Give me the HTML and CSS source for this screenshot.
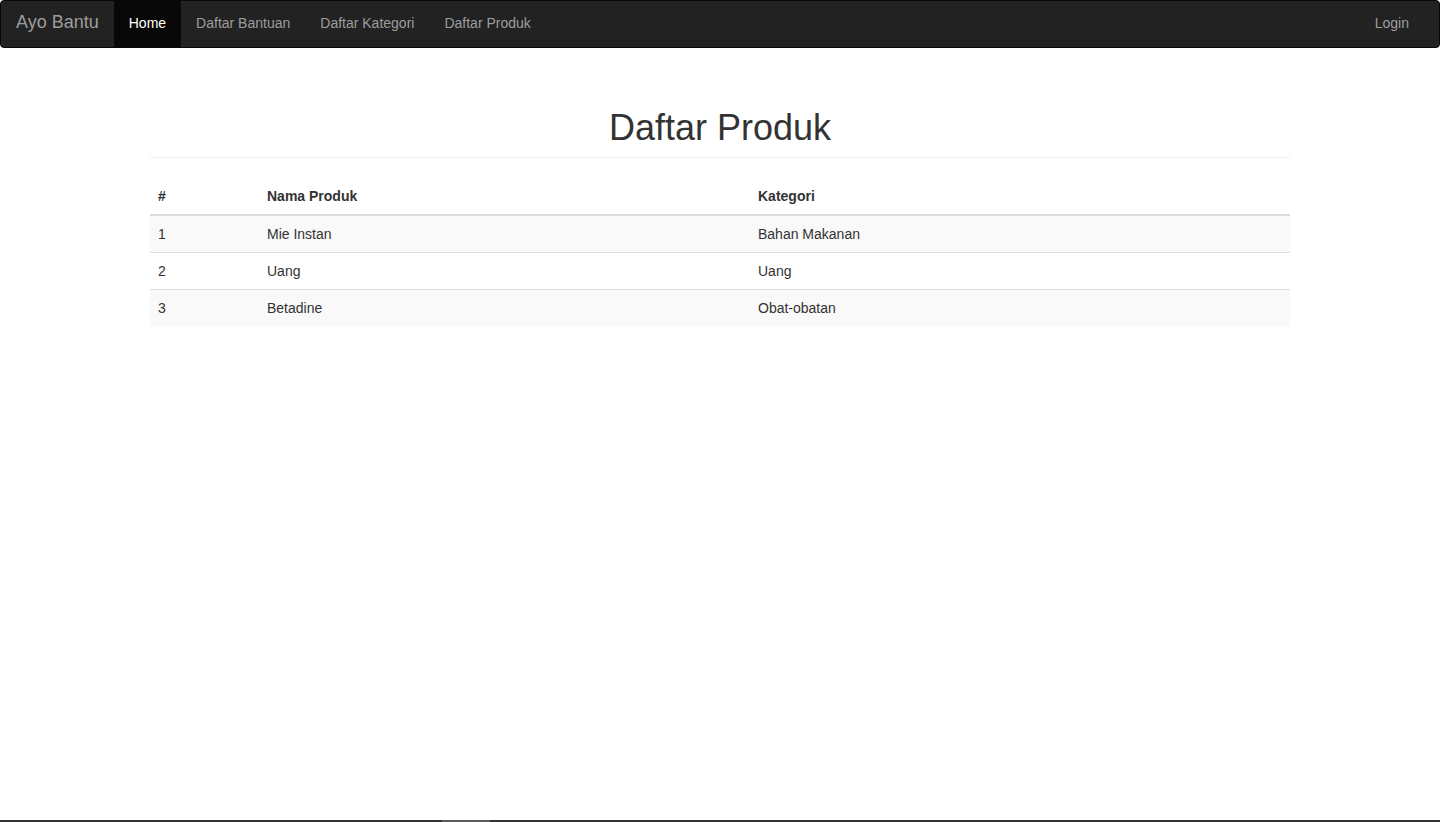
FILE: index.html
```html
<!DOCTYPE html>
<html lang="id">
<head>
<meta charset="utf-8">
<title>Ayo Bantu - Daftar Produk</title>
<link rel="stylesheet" href="styles.css">
</head>
<body>
<nav class="navbar">
  <div class="nav-left">
    <a class="brand" href="#">Ayo Bantu</a>
    <ul class="nav-links">
      <li><a class="active" href="#">Home</a></li>
      <li><a href="#">Daftar Bantuan</a></li>
      <li><a href="#">Daftar Kategori</a></li>
      <li><a href="#">Daftar Produk</a></li>
    </ul>
  </div>
  <ul class="nav-links nav-right">
    <li><a href="#">Login</a></li>
  </ul>
</nav>
<main class="container">
  <div class="page-header">
    <h1>Daftar Produk</h1>
  </div>
  <table class="table">
    <thead>
      <tr><th class="c-no">#</th><th class="c-name">Nama Produk</th><th>Kategori</th></tr>
    </thead>
    <tbody>
      <tr><td>1</td><td>Mie Instan</td><td>Bahan Makanan</td></tr>
      <tr><td>2</td><td>Uang</td><td>Uang</td></tr>
      <tr><td>3</td><td>Betadine</td><td>Obat-obatan</td></tr>
    </tbody>
  </table>
</main>
<div class="bottom-bar"><span class="thumb"></span></div>
</body>
</html>
```
FILE: styles.css
```css
* { box-sizing: border-box; }
html, body { margin: 0; padding: 0; }
body {
  font-family: "Liberation Sans", Arial, Helvetica, sans-serif;
  font-size: 14px;
  line-height: 20px;
  color: #333;
  background: #fff;
}
a { text-decoration: none; }

.navbar {
  display: flex;
  justify-content: space-between;
  height: 48px;
  background: #222;
  border: 1px solid #080808;
  border-radius: 4px;
}
.nav-left { display: flex; }
.brand {
  display: block;
  padding: 11px 15px 15px 15px;
  font-size: 18px;
  line-height: 20px;
  color: #9d9d9d;
}
.nav-links {
  display: flex;
  list-style: none;
  margin: 0;
  padding: 0;
}
.nav-right { padding-right: 15px; }
.nav-links a {
  display: block;
  padding: 12px 15px 14px 15px;
  line-height: 20px;
  color: #9d9d9d;
}
.nav-links a.active {
  color: #fff;
  background: #080808;
}

.container {
  width: 1140px;
  margin: 0 auto;
  padding-top: 60px;
}
.page-header {
  padding-bottom: 9px;
  border-bottom: 1px solid #eee;
}
.page-header h1 {
  margin: 0;
  font-size: 36px;
  line-height: 40px;
  font-weight: 500;
  text-align: center;
  color: #333;
}

.table {
  width: 100%;
  margin-top: 20px;
  border-collapse: collapse;
  border-spacing: 0;
}
.table th, .table td {
  padding: 8px;
  line-height: 20px;
  text-align: left;
  vertical-align: top;
}
.table th {
  font-weight: bold;
  border-bottom: 2px solid #ddd;
}
.table td { border-top: 1px solid #ddd; }
.table tbody tr:first-child td { border-top: 0; }
.table tbody tr:nth-child(odd) { background: #f9f9f9; }
.c-no { width: 109px; }
.c-name { width: 491px; }

.bottom-bar {
  position: fixed;
  left: 0;
  right: 0;
  bottom: 0;
  height: 2px;
  background: #333;
}
.thumb {
  position: absolute;
  left: 442px;
  top: 0;
  width: 48px;
  height: 2px;
  background: #5a5a5a;
}
```
